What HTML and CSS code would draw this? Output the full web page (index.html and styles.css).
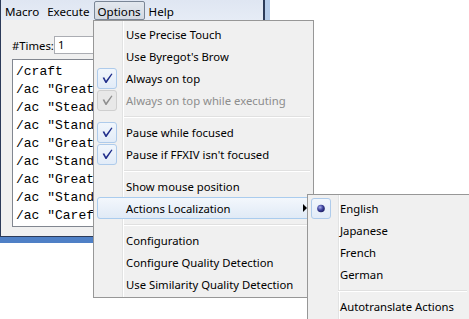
FILE: index.html
```html
<!DOCTYPE html>
<html lang="en">
<head>
  <meta charset="UTF-8">
  <title>Macro Options</title>
  <link rel="stylesheet" href="styles.css">
</head>
<body>
  <div class="desktop">

    <div class="frame">
      <div class="window">
        <div class="menubar">
          <span class="mb-item">Macro</span>
          <span class="mb-item">Execute</span>
          <span class="mb-item open">Options</span>
          <span class="mb-item">Help</span>
        </div>
        <div class="content">
          <div class="times-row">
            <span class="times-label">#Times:</span>
            <div class="times-input">1</div>
          </div>
          <div class="editor">
            <div class="line">/craft</div>
            <div class="line">/ac "Great Strides" &lt;wait.3&gt;</div>
            <div class="line">/ac "Steady Hand" &lt;wait.3&gt;</div>
            <div class="line">/ac "Standard Touch" &lt;wait.3&gt;</div>
            <div class="line">/ac "Great Strides" &lt;wait.3&gt;</div>
            <div class="line">/ac "Standard Touch" &lt;wait.3&gt;</div>
            <div class="line">/ac "Great Strides" &lt;wait.3&gt;</div>
            <div class="line">/ac "Standard Touch" &lt;wait.3&gt;</div>
            <div class="line">/ac "Careful Synthesis" &lt;wait.3&gt;</div>
          </div>
        </div>
      </div>
    </div>

    <!-- Options dropdown -->
    <div class="menu main-menu">
      <div class="item"><span class="icon"></span><span class="label">Use Precise Touch</span></div>
      <div class="item"><span class="icon"></span><span class="label">Use Byregot's Brow</span></div>
      <div class="item"><span class="icon check"><svg width="20" height="21" viewBox="0 0 20 21"><path d="M5.6 9.7 L7.2 9.2 L9 12.7 L14.4 5.4 L15.5 6 L9.5 15 L8.5 15 Z" fill="#1f2d8a"/></svg></span><span class="label">Always on top</span></div>
      <div class="item disabled"><span class="icon check"><svg width="20" height="21" viewBox="0 0 20 21"><path d="M5.6 9.7 L7.2 9.2 L9 12.7 L14.4 5.4 L15.5 6 L9.5 15 L8.5 15 Z" fill="#8e8e8e"/></svg></span><span class="label">Always on top while executing</span></div>
      <div class="sep"></div>
      <div class="item"><span class="icon check"><svg width="20" height="21" viewBox="0 0 20 21"><path d="M5.6 9.7 L7.2 9.2 L9 12.7 L14.4 5.4 L15.5 6 L9.5 15 L8.5 15 Z" fill="#1f2d8a"/></svg></span><span class="label">Pause while focused</span></div>
      <div class="item"><span class="icon check"><svg width="20" height="21" viewBox="0 0 20 21"><path d="M5.6 9.7 L7.2 9.2 L9 12.7 L14.4 5.4 L15.5 6 L9.5 15 L8.5 15 Z" fill="#1f2d8a"/></svg></span><span class="label">Pause if FFXIV isn't focused</span></div>
      <div class="sep"></div>
      <div class="item"><span class="icon"></span><span class="label">Show mouse position</span></div>
      <div class="item hover"><span class="icon"></span><span class="label">Actions Localization</span><span class="arrow"></span></div>
      <div class="sep"></div>
      <div class="item"><span class="icon"></span><span class="label">Configuration</span></div>
      <div class="item"><span class="icon"></span><span class="label">Configure Quality Detection</span></div>
      <div class="item"><span class="icon"></span><span class="label">Use Similarity Quality Detection</span></div>
    </div>

    <!-- Actions Localization submenu -->
    <div class="menu sub-menu">
      <div class="item"><span class="icon check"><svg width="20" height="21" viewBox="0 0 20 21"><defs><radialGradient id="dot" cx="0.38" cy="0.35" r="0.7"><stop offset="0" stop-color="#aab0ee"/><stop offset="0.55" stop-color="#3a3f99"/><stop offset="1" stop-color="#1c1d5e"/></radialGradient></defs><circle cx="10" cy="10.5" r="3.8" fill="url(#dot)"/></svg></span><span class="label">English</span></div>
      <div class="item"><span class="icon"></span><span class="label">Japanese</span></div>
      <div class="item"><span class="icon"></span><span class="label">French</span></div>
      <div class="item"><span class="icon"></span><span class="label">German</span></div>
      <div class="sep"></div>
      <div class="item"><span class="icon"></span><span class="label">Autotranslate Actions</span></div>
    </div>

  </div>
</body>
</html>
```

FILE: styles.css
```css
body {
  margin: 0;
  background: #fff;
  font-family: "Segoe UI", "Noto Sans", sans-serif;
  font-size: 11.3px;
  color: #000;
}

.desktop {
  position: relative;
  width: 469px;
  height: 319px;
  overflow: hidden;
}

/* Window */
.frame {
  position: absolute;
  left: 0;
  top: 0;
  border-right: 5px solid #b7cdea;
  border-bottom: 6px solid #4f80c6;
}

.window {
  width: 262px;
  border: solid #2c3b59;
  border-width: 0 2px 1px 1px;
  background: #f0f0f0;
}

.menubar {
  display: flex;
  height: 20px;
  background: linear-gradient(#dfe6f2, #e6ecf6);
  border-bottom: 1px solid #f0f0f0;
}

.mb-item {
  padding: 1px 3px 0;
  line-height: 17px;
  border: 1px solid transparent;
  border-radius: 2px;
  margin-top: 1px;
  font-size: 11.6px;
}

.mb-item.open {
  border-color: #7a8696;
  background: linear-gradient(#e3e8ee, #d3d9e2);
}

.content {
  padding: 15px 0 9px 11px;
}

.times-row {
  display: flex;
  align-items: center;
  height: 18px;
}

.times-label {
  width: 42px;
}

.times-input {
  width: 180px;
  height: 16px;
  line-height: 16px;
  border: 1px solid #abadb3;
  background: #fff;
  padding-left: 3px;
}

.editor {
  margin-top: 5px;
  width: 230px;
  height: 160px;
  border: 1px solid #828790;
  background: #fff;
  padding: 3px;
  font-family: "Liberation Mono", monospace;
  font-size: 13px;
  line-height: 18px;
  overflow: hidden;
}

.line {
  white-space: pre;
}

/* Menus */
.menu {
  position: absolute;
  box-sizing: border-box;
  border: 1px solid #979797;
  background-color: #f0f0f0;
}

.main-menu {
  left: 93px;
  top: 20px;
  width: 221px;
  padding: 2px 3px 2px 3px;
  background-image: linear-gradient(to right, transparent 28px, #e2e3e3 28px, #e2e3e3 29px, #fff 29px, #fff 30px, transparent 30px);
}

.sub-menu {
  left: 307px;
  top: 194px;
  width: 164px;
  height: 140px;
  padding: 2px 3px;
  background-image: linear-gradient(to right, transparent 30px, #e2e3e3 30px, #e2e3e3 31px, #fff 31px, #fff 32px, transparent 32px);
}

.item {
  display: flex;
  align-items: center;
  height: 22px;
  box-sizing: border-box;
  border: 1px solid transparent;
  border-radius: 3px;
  position: relative;
}

.item .icon {
  width: 20px;
  height: 21px;
  margin-left: -1px;
  box-sizing: border-box;
  flex-shrink: 0;
}

.item .icon.check {
  border: 1px solid #aecbeb;
  border-radius: 3px;
  background: linear-gradient(#f1f6fc, #e2ecf8);
}

.item .icon svg {
  display: block;
  margin: -1px;
}

.item .label {
  padding: 2px 0 0 9px;
  line-height: 18px;
  white-space: nowrap;
}

.item.disabled .label {
  color: #8d8d8d;
}

.item.disabled .icon.check {
  border-color: #cfcfcf;
  background: #e8e8e8;
}

.item.hover {
  border-color: #aaccee;
  background: linear-gradient(#f3f7fc, #e0eaf6);
}

.item .arrow {
  position: absolute;
  right: 2px;
  top: 6px;
  border-left: 4px solid #000;
  border-top: 4px solid transparent;
  border-bottom: 4px solid transparent;
}

.sep {
  height: 10px;
  box-sizing: border-box;
  margin-left: 27px;
  padding-top: 5px;
}

.sep::before {
  content: "";
  display: block;
  border-top: 1px solid #e0e0e0;
  border-bottom: 1px solid #fff;
}
```
